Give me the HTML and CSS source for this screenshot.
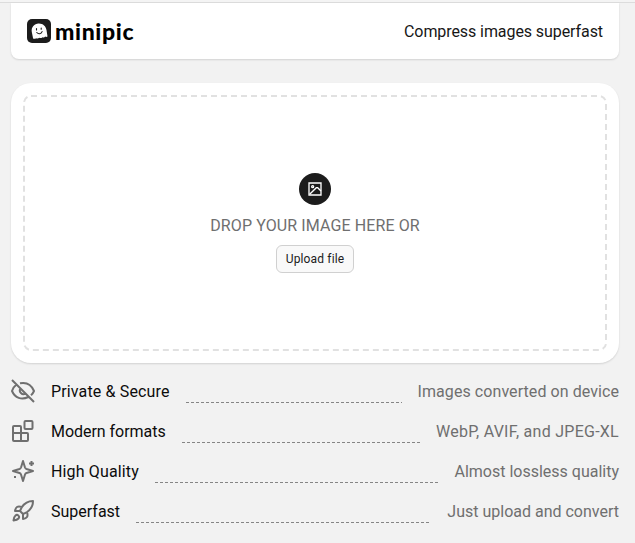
FILE: index.html
```html
<!DOCTYPE html>
<html lang="en">
<head>
<meta charset="utf-8">
<title>minipic</title>
<link rel="stylesheet" href="styles.css">
</head>
<body>
<main class="page">
  <header class="header">
    <div class="brand">
      <svg class="logo" viewBox="0 0 24 24"><rect width="24" height="24" rx="5" fill="#1c1c1c"/><path d="M4.800 13C4 8 7.500 4.700 11.500 4.500c4.400-.2 7.400 2.700 8 6.500l1 6.500c-.9.600-1.600.400-2.300.100-.7.900-1.700 1.100-2.700.6-1 .9-2.100 1.100-3.200.6-1 .8-2.100.9-3.200.4-.9.600-2 .8-3 .3z" fill="#fff"/><path d="M9.500 9.600v1.300M14.200 9v1.300M9.800 13.500c1.600 2 4.300 1.600 5.300-.9" fill="none" stroke="#1c1c1c" stroke-width="1.100" stroke-linecap="round"/></svg>
      <span class="wordmark">minipic</span>
    </div>
    <span class="tagline">Compress images superfast</span>
  </header>
  <section class="card">
    <div class="dropzone">
      <svg class="frame"><rect x="1" y="1" width="582" height="254" rx="7"/></svg>
      <div class="badge"><svg viewBox="0 0 24 24"><path d="M3 3h18v18H3z"/><circle cx="8.500" cy="8.500" r="1.500"/><path d="M4 20 14 10h2l5 5"/></svg></div>
      <p class="prompt">DROP YOUR IMAGE HERE OR</p>
      <button class="upload"><span>Upload file</span></button>
    </div>
  </section>
  <ul class="features">
    <li>
      <svg class="icon" viewBox="0 0 24 24"><path d="M1 1l22 22M9 4.300C15.500 3 20.500 6 23 12c-.8 1.900-1.800 3.200-3 4.300M5.500 5.500C3.500 7 2 9 1 12c3 7 9.500 9.500 16.300 6M9.500 9.500a3.600 3.600 0 0 0 5 5"/></svg>
      <span class="name private">Private &amp; Secure</span><svg class="leader"><path d="M0 .5H500"/></svg><span class="detail device">Images converted on device</span>
    </li>
    <li>
      <svg class="icon" viewBox="0 0 24 24"><rect x="13.500" y="2" width="8" height="8" rx="1"/><path d="M10 21V8a1 1 0 0 0-1-1H3a1 1 0 0 0-1 1v13a1 1 0 0 0 1 1h13a1 1 0 0 0 1-1v-6a1 1 0 0 0-1-1H2"/></svg>
      <span class="name modern">Modern formats</span><svg class="leader"><path d="M0 .5H500"/></svg><span class="detail formats">WebP, AVIF, and JPEG-XL</span>
    </li>
    <li>
      <svg class="icon" viewBox="0 0 24 24"><path d="M12 2 14 8.500a2.500 2.500 0 0 0 1.500 1.500L22 12l-6.500 2a2.500 2.500 0 0 0-1.500 1.500L12 22l-2-6.500A2.500 2.500 0 0 0 8.500 14L2 12l6.500-2A2.500 2.500 0 0 0 10 8.500zM20.500 2v5M18 4.500h5M4 17v2M3 18h2"/></svg>
      <span class="name quality">High Quality</span><svg class="leader"><path d="M0 .5H500"/></svg><span class="detail lossless">Almost lossless quality</span>
    </li>
    <li>
      <svg class="icon" viewBox="0 0 24 24"><path d="M4.500 16.500c-1.500 1.260-2 5-2 5s3.740-.5 5-2c.71-.84.700-2.130-.09-2.910a2.180 2.180 0 0 0-2.910-.09zM12 15l-3-3a22 22 0 0 1 2-3.950A12.880 12.880 0 0 1 22 2c0 2.720-.78 7.500-6 11a22.350 22.350 0 0 1-4 2zM9 12H4s.55-3.030 2-4c1.620-1.080 5 0 5 0M12 15v5s3.030-.55 4-2c1.080-1.620 0-5 0-5"/></svg>
      <span class="name superfast">Superfast</span><svg class="leader"><path d="M0 .5H500"/></svg><span class="detail upload-text">Just upload and convert</span>
    </li>
  </ul>
</main>
</body>
</html>
```

FILE: styles.css
```css
* { box-sizing: border-box; }
body {
  margin: 0;
  padding-top: 3px;
  background: #f2f2f2;
  box-shadow: inset 0 2px #f4f4f4, inset 0 3px #dcdcdc;
  font: 16px/24px Roboto, sans-serif;
  color: #171717;
  height: 543px;
  overflow: hidden;
}
.page { width: 608px; margin-left: 11px; }
.header {
  height: 56px;
  padding: 0 16px;
  background: #fff;
  border-radius: 0 0 8px 8px;
  box-shadow: 0 1px 2px #0002;
  display: flex;
  align-items: center;
  justify-content: space-between;
}
.brand { display: flex; align-items: center; gap: 4px; }
.logo { width: 24px; height: 24px; }
.wordmark { font: 900 23px/28px Lato, sans-serif; letter-spacing: .65px; color: #000; padding-bottom: 1px; }
.tagline { letter-spacing: -.08px; padding-top: 2px; }
.card {
  height: 280px;
  margin-top: 24px;
  padding: 12px;
  background: #fff;
  border-radius: 20px;
  box-shadow: 0 1px 2px #0002;
}
.dropzone {
  position: relative;
  height: 256px;
  padding-top: 78px;
  display: flex;
  flex-direction: column;
  align-items: center;
}
.frame { position: absolute; inset: 0; width: 584px; height: 256px; fill: none; stroke: #e1e1e1; stroke-width: 2; stroke-dasharray: 6 4; }
.badge { width: 32px; height: 32px; border-radius: 50%; background: #1c1c1c; display: grid; place-items: center; }
.badge svg { width: 16px; height: 16px; fill: none; stroke: #fff; stroke-width: 2; }
.prompt { margin: 9px 0 7px; color: #6f6f6f; white-space: nowrap; letter-spacing: .11px; }
.upload {
  width: 78px;
  height: 28px;
  padding: 0;
  border: 1px solid #d0d0d0;
  border-radius: 6px;
  background: #f9f9f9;
  color: #202020;
  font: 12px/16px Roboto, sans-serif;
  letter-spacing: .15px;
}
.features { list-style: none; margin: 8px 0 0; padding: 0; }
.features li { height: 40px; display: flex; align-items: center; white-space: nowrap; }
.icon { width: 24px; height: 24px; flex: none; margin-right: 16px; fill: none; stroke: #6f6f6f; stroke-width: 2; stroke-linejoin: round; }
.leader { flex: 1; min-width: 0; height: 1px; margin: 22px 16px 0; stroke: #858585; stroke-dasharray: 3 2; }
.name { padding-top: 2px; color: #0c0c0c; }
.detail { padding-top: 2px; color: #6f6f6f; }
.private { letter-spacing: .14px; }
.modern { letter-spacing: -.04px; }
.quality { letter-spacing: .14px; }
.device { letter-spacing: .07px; }
.formats { letter-spacing: .26px; }
```
